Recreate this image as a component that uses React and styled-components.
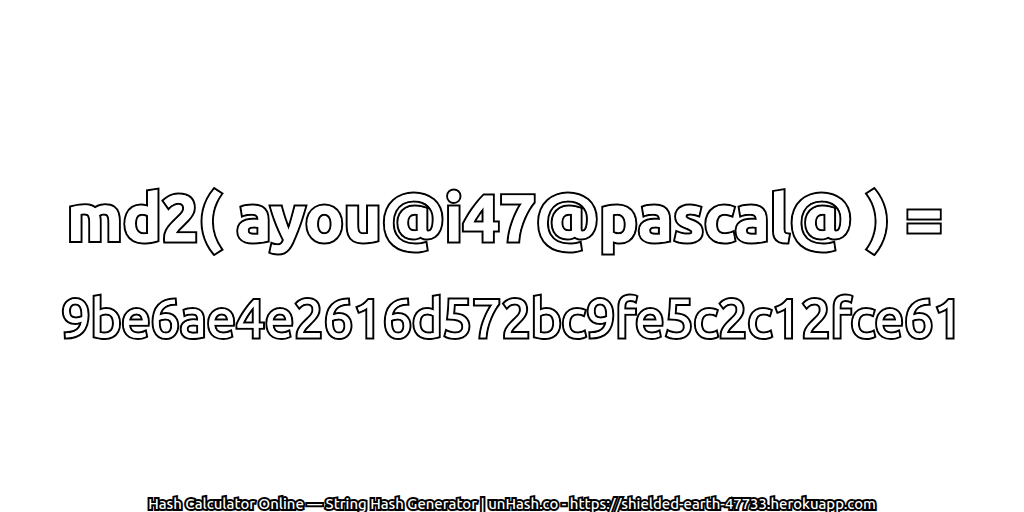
import React from 'react';
import styled, { createGlobalStyle } from 'styled-components';

const Global = createGlobalStyle`
  html, body { margin: 0; padding: 0; background: #fff; }
  body { width: 1024px; height: 512px; overflow: hidden; }
`;
const Page = styled.main`
  width: 1024px; height: 512px; display: flex; flex-direction: column; align-items: center;
  font-family: "Ubuntu", "Noto Sans", "DejaVu Sans", sans-serif; color: #fff;
`;
const Outlined = styled.div`
  position: relative;
  white-space: nowrap;
  -webkit-text-stroke: ${p => p.$outer}px #000;
  paint-order: stroke fill;
  &::after {
    content: attr(data-text);
    position: absolute;
    left: 0;
    top: 0;
    -webkit-text-stroke: ${p => p.$inner}px #fff;
  }
`;
const Title = styled(Outlined)`
  margin-top: 175px; margin-right: 15px; font-size: 65px; line-height: 84px; font-weight: 700;
`;
const Hash = styled(Outlined)`
  margin-top: 26px; font-size: 52.3px; line-height: 66px; font-weight: 400;
`;
const Footer = styled.div`
  margin-top: auto; font-size: 14.9px; line-height: 16px; white-space: nowrap;
  -webkit-text-stroke: 4px #000; paint-order: stroke fill; font-weight: 500;
`;
const title = 'md2( ayou@i47@pascal@ ) =';
const hash = '9be6ae4e2616d572bc9fe5c2c12fce61';
export default function App() {
  return (
    <Page>
      <Global />
      <Title $outer={5} $inner={1} data-text={title}>{title}</Title>
      <Hash $outer={5} $inner={1} data-text={hash}>{hash}</Hash>
      <Footer>Hash Calculator Online — String Hash Generator | unHash.co - https://shielded-earth-47733.herokuapp.com</Footer>
    </Page>
  );
}
